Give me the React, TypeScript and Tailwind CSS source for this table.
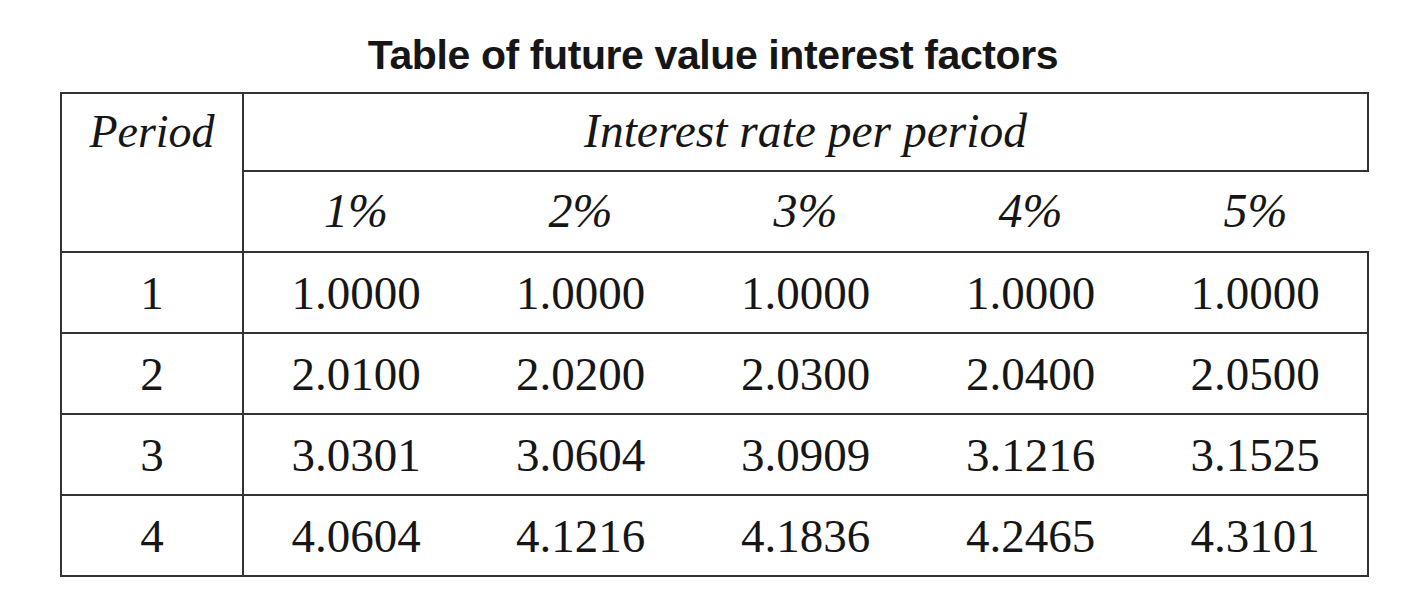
const rates = ["1%", "2%", "3%", "4%", "5%"];

const rows = [
  ["1", "1.0000", "1.0000", "1.0000", "1.0000", "1.0000"],
  ["2", "2.0100", "2.0200", "2.0300", "2.0400", "2.0500"],
  ["3", "3.0301", "3.0604", "3.0909", "3.1216", "3.1525"],
  ["4", "4.0604", "4.1216", "4.1836", "4.2465", "4.3101"],
];

export default function App() {
  return (
    <div className="w-full h-[614px] bg-white text-[#161616] overflow-hidden">
      <h1 className="pt-[33px] h-[92px] text-center text-[41px] leading-[44px] font-bold font-['Liberation_Sans',Arial,sans-serif] tracking-[-0.4px]">
        Table of future value interest factors
      </h1>
      <table className="ml-[60px] w-[1308px] table-fixed border-collapse font-['Liberation_Serif','Times_New_Roman',serif] text-[47px]">
        <colgroup>
          <col className="w-[182px]" />
          {rates.map((r) => (
            <col key={r} className="w-[225px]" />
          ))}
        </colgroup>
        <thead>
          <tr className="h-[78px]">
            <th rowSpan={2} className="border-2 border-[#333] align-top pt-[13px] font-normal italic text-[46px] leading-[50px]">
              Period
            </th>
            <th colSpan={5} className="border-2 border-[#333] font-normal italic text-[47.5px] leading-[50px] pb-[2px]">
              Interest rate per period
            </th>
          </tr>
          <tr className="h-[81px]">
            {rates.map((r) => (
              <th key={r} className="border-b-2 border-[#333] font-normal italic text-[48px] leading-[50px] pb-[2px]">
                {r}
              </th>
            ))}
          </tr>
        </thead>
        <tbody>
          {rows.map((row) => (
            <tr key={row[0]} className="h-[81px]">
              {row.map((cell, i) => (
                <td
                  key={i}
                  className={
                    i === 0
                      ? "border-2 border-[#333] text-center leading-[50px]"
                      : "border-y-2 border-r-0 border-[#333] text-center leading-[50px] last:border-r-2"
                  }
                >
                  {cell}
                </td>
              ))}
            </tr>
          ))}
        </tbody>
      </table>
    </div>
  );
}
